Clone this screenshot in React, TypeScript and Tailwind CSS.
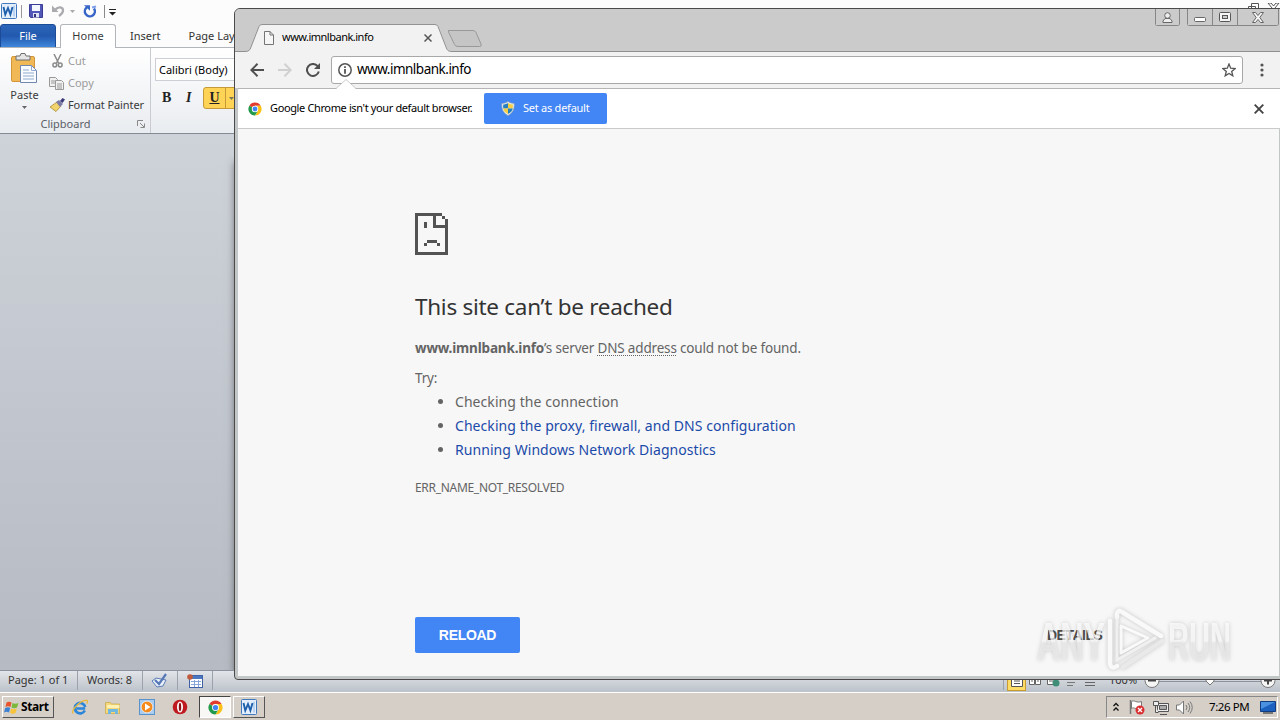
import type { ReactNode } from "react";

const UI = "font-['Noto_Sans','Open_Sans',sans-serif]";

function WordIcon({ size = 16 }: { size?: number }) {
  return (
    <svg width={size} height={size} viewBox="0 0 16 16" className="shrink-0">
      <rect x="0.5" y="0.5" width="15" height="15" rx="1" fill="#e4effb" stroke="#3f78bd" />
      <path d="M12 2.5h2v11h-2z" fill="#b9d3f0" />
      <path d="M2.500 4l1.800 7.500L7 5l2.400 6.500L11.500 4" fill="none" stroke="#1e5fae" strokeWidth="1.900" />
    </svg>
  );
}

function ChromeIcon({ size = 14 }: { size?: number }) {
  return (
    <svg width={size} height={size} viewBox="0 0 16 16" className="shrink-0">
      <circle cx="8" cy="8" r="7.5" fill="#fff" />
      <path d="M8 8L1.5 4.25A7.5 7.5 0 0 1 14.5 4.25H8z" fill="#e33b2e" />
      <path d="M8 4.25h6.5A7.5 7.5 0 0 1 8 15.5L11.2 10z" fill="#fbc116" />
      <path d="M1.5 4.25A7.5 7.5 0 0 0 8 15.5L11.2 9.9 8 8z" fill="#229a4b" />
      <circle cx="8" cy="8" r="3.7" fill="#fff" />
      <circle cx="8" cy="8" r="2.8" fill="#4285f4" />
    </svg>
  );
}

function WordTitleBar() {
  return (
    <div className="flex h-6 shrink-0 items-start bg-[#fcfcfc] pt-[3px] pl-[1px]">
      <WordIcon size={16} />
      <div className="mt-[2px] ml-1 h-[13px] w-px bg-[#999]" />
      <svg width="14" height="14" viewBox="0 0 14 14" className="mt-[1px] ml-[7px]">
        <path d="M.5.5h13v13h-12l-1-1z" fill="#5258b8" stroke="#383c92" />
        <path d="M3 1h8v6H3z" fill="#f3f5ff" />
        <path d="M4 9h6v4.5H4z" fill="#dfe2f4" />
        <path d="M5 10h2v3H5z" fill="#30347c" />
      </svg>
      <svg width="14" height="14" viewBox="0 0 14 14" className="mt-[1px] ml-2">
        <path d="M4.5 5.5C7 2.5 12 2.5 12 6.5c0 2.5-2 4-4 5.5" fill="none" stroke="#aaaaaf" strokeWidth="2.3" />
        <path d="M1 1.5V8h6.5z" fill="#aaaaaf" />
      </svg>
      <svg width="5" height="3" viewBox="0 0 5 3" className="mt-[7px] ml-[5px]"><path d="M0 0h5L2.5 3z" fill="#aaa" /></svg>
      <svg width="14" height="14" viewBox="0 0 14 14" className="mt-[1px] ml-2">
        <path d="M4 3.2A5 5 0 1 0 11 4.5" fill="none" stroke="#3866c8" strokeWidth="2.5" />
        <path d="M1 1.2h6v5.6z" fill="#3866c8" />
        <path d="M9 3.5l4-1" stroke="#7da0e8" strokeWidth="2" />
      </svg>
      <div className="mt-[2px] ml-[7px] h-[13px] w-px bg-[#888]" />
      <svg width="7" height="7" viewBox="0 0 7 7" className="mt-[6px] ml-[4px]">
        <path d="M0 .5h7" stroke="#222" />
        <path d="M0 3h7L3.5 6.5z" fill="#222" />
      </svg>
      <svg width="34" height="12" viewBox="0 0 34 12" className="ml-auto" fill="#fff" stroke="#555">
        <path d="M5.500 .5h7v7h-7zM2.500 3.500h7v7h-7z" />
        <path d="M22 0l3 0 2.500 3L30 0h3l-4 5 4 5h-3l-2.500-3L25 10h-3l4-5z" />
      </svg>
    </div>
  );
}

function RibbonTabs() {
  return (
    <div className="flex h-[23px] shrink-0 bg-[#fcfcfc] text-[11px] leading-[22px] text-[#333]">
      <div className="h-6 w-14 rounded-t-[3px] border border-[#1c4c98] bg-linear-to-b from-[#2b65b8] via-[#2259ae] to-[#4087dc] text-center text-white">File</div>
      <div className="z-1 ml-1 h-6 w-14 rounded-t-[3px] border border-b-0 border-[#b2b5ba] bg-white text-center text-black/80">Home</div>
      <div className="ml-[14px] pt-[1px]">Insert</div>
      <div className="ml-7 pt-[1px] whitespace-nowrap">Page Layout</div>
    </div>
  );
}

function Ribbon() {
  return (
    <div className="flex h-[87px] shrink-0 border-y border-t-[#b2b5ba] border-b-[#848a94] bg-linear-to-b from-white to-[#e9ecf0] text-[11px] leading-[22px] text-[#3b3b3b]">
      <div className="flex w-[151px] flex-col border-r border-[#c8ccd2]">
        <div className="flex h-[67px]">
          <div className="flex w-[49px] flex-col items-center pt-[5px]">
            <svg width="27" height="30" viewBox="0 0 27 30" className="shrink-0">
              <rect x=".5" y="3.500" width="23" height="25" rx="1.500" fill="#f0b955" stroke="#d4963a" />
              <path d="M5 3h4l1-2.500h4L15 3h4v4H5z" fill="#e5e5e5" stroke="#6d6d6d" />
              <path d="M9.500 12.500h11l5 5v12h-16z" fill="#fafdff" stroke="#7187ae" />
              <path d="M20.500 12.500v5h5M12 17h6M12 20h11M12 23h11M12 26h11" fill="none" stroke="#8fa9cf" />
            </svg>
            <div className="mt-[4px] leading-[16px]">Paste</div>
            <svg width="5" height="3" viewBox="0 0 5 3" className="mt-[3px]"><path d="M0 0h5L2.500 3z" fill="#666" /></svg>
          </div>
          <div className="flex flex-col pt-[2px] whitespace-nowrap">
            <div className="flex h-[22px] items-center text-[#9b9b9b]">
              <svg width="11" height="14" viewBox="0 0 11 14" className="mr-[5px] ml-[3px]" fill="none" stroke="#8b8b8b">
                <path d="M2 0l4.500 9M9 0L4.500 9" strokeWidth="1.500" />
                <circle cx="2.800" cy="11" r="1.900" strokeWidth="1.500" /><circle cx="8.200" cy="11" r="1.900" strokeWidth="1.500" />
              </svg>
              Cut
            </div>
            <div className="flex h-[22px] items-center text-[#9b9b9b]">
              <svg width="15" height="13" viewBox="0 0 15 13" className="mr-[4px]" fill="#f0f0f0" stroke="#999">
                <path d="M.5.500h6l2 2v7h-8zM2 4h4M2 6h4" />
                <path d="M6.500 3.500h6l2 2v7h-8zM8 7h5M8 9h5M8 11h5" />
              </svg>
              Copy
            </div>
            <div className="flex h-[22px] items-center tracking-[-0.100px]">
              <svg width="16" height="14" viewBox="0 0 16 14" className="mr-[3px]">
                <path d="M1 9l7-5 4 4-5 5.500z" fill="#f2d46c" stroke="#a88a2e" strokeWidth=".8" />
                <path d="M7 4l3-2 4 4-3 3z" fill="#7c7ba8" />
                <path d="M11 3l2.500-3L16 1.500 13.500 5z" fill="#3c3a78" />
              </svg>
              Format Painter
            </div>
          </div>
        </div>
        <div className="flex h-[18px] items-center text-[#5a6068]">
          <div className="w-[131px] text-center">Clipboard</div>
          <svg width="8" height="8" viewBox="0 0 8 8" className="ml-[6px]" fill="none" stroke="#888">
            <path d="M.5 6V.5H6M3 3l4 4M7.500 3.500v4h-4" />
          </svg>
        </div>
      </div>
      <div className="flex flex-col pt-[10px] pl-[4px]">
        <div className="flex h-[23px] w-[120px] items-center border border-[#ccd0d6] bg-white pl-[3px] text-black">Calibri (Body)</div>
        <div className="mt-[6px] flex h-[22px] items-center font-['Liberation_Serif',serif] text-[14px] font-bold text-[#222]">
          <span className="ml-[7px] w-[24px]">B</span>
          <span className="w-[17px] italic">I</span>
          <div className="flex h-[22px] w-10 items-center rounded-[3px] border border-[#c59b38] bg-[#ffd456]">
            <span className="flex h-5 w-[22px] items-center justify-center border-r border-[#c59b38] underline">U</span>
            <svg width="5" height="3" viewBox="0 0 5 3" className="ml-[3px]"><path d="M0 0h5L2.500 3z" fill="#775" /></svg>
          </div>
        </div>
      </div>
    </div>
  );
}

function StatusDivider() {
  return <div className="h-[19px] w-px shrink-0 bg-[#9ca2ac]" />;
}

function WordStatusBar() {
  return (
    <div className="flex h-[22px] shrink-0 items-center border-t border-[#8d939c] bg-linear-to-b from-[#e2e5e9] to-[#bcc2ca] pb-[2px] text-[11px] text-[#333]">
      <div className="w-[77px] pl-2 whitespace-nowrap">Page: 1 of 1</div>
      <StatusDivider />
      <div className="w-[64px] pl-[9px] whitespace-nowrap">Words: 8</div>
      <StatusDivider />
      <svg width="17" height="15" viewBox="0 0 17 15" className="ml-2">
        <path d="M1 8l4-3 10 2-3 6-6 1z" fill="#e9f0fa" stroke="#5b7cb4" />
        <path d="M4 7l4 4 7-10" fill="none" stroke="#5879b8" strokeWidth="2.200" />
      </svg>
      <div className="ml-[9px]"><StatusDivider /></div>
      <svg width="16" height="14" viewBox="0 0 16 14" className="ml-[9px]">
        <rect x="2.500" y="1.500" width="13" height="12" fill="#fff" stroke="#3e62a5" />
        <path d="M3 2h12v3H3z" fill="#4a76c2" />
        <path d="M4 7.500h10M4 10.500h10M7.500 6v7M11.500 6v7" stroke="#86a5d8" />
        <circle cx="3" cy="3" r="2.800" fill="#c05a3c" />
      </svg>
      <div className="ml-[9px]"><StatusDivider /></div>
      <div className="ml-auto flex h-full items-center">
        <StatusDivider />
        <div className="ml-[3px] flex h-[20px] w-[19px] items-center justify-center border border-[#c89c32] bg-[#ffdc66]">
          <svg width="12" height="12" viewBox="0 0 12 12" fill="#fff" stroke="#555"><path d="M.5.5h11v11H.5zM3 3.500h6M3 6h6M3 8.500h6" /></svg>
        </div>
        <svg width="12" height="12" viewBox="0 0 12 12" className="ml-[3px]" fill="#fff" stroke="#666"><path d="M.5 1.500h5v8h-5zM6.500 1.500h5v8h-5zM2 4h2M2 6h2M8 4h2M8 6h2" /></svg>
        <svg width="13" height="12" viewBox="0 0 13 12" className="ml-[6px]"><path d="M.5.500h9v9h-9zM2 3h6M2 6h6" fill="#fff" stroke="#666" /><circle cx="9" cy="8" r="3.500" fill="#3f8f78" /></svg>
        <svg width="10" height="11" viewBox="0 0 10 11" className="ml-[7px]" stroke="#777"><path d="M2 1.500h8M2 4.500h6M0 7.500h8M0 10.500h6" /></svg>
        <svg width="10" height="11" viewBox="0 0 10 11" className="ml-[8px]" stroke="#666"><path d="M0 1.500h10M0 4.500h10M0 7.500h10M0 10.500h10" /></svg>
        <div className="ml-[14px] w-[27px] text-[11px] whitespace-nowrap">100%</div>
        <svg width="138" height="18" viewBox="0 0 138 18" className="mr-[1px] ml-[5px]">
          <path d="M18 9.500h102" stroke="#8b929c" />
          <circle cx="11" cy="8.500" r="7" fill="#f5f5f5" stroke="#777" />
          <path d="M7 8.500h8" stroke="#444" strokeWidth="2" />
          <path d="M65 4h8v5l-4 4-4-4z" fill="#fff" stroke="#777" />
          <circle cx="127" cy="8.500" r="7" fill="#f5f5f5" stroke="#777" />
          <path d="M123 8.500h8M127 4.500v8" stroke="#444" strokeWidth="2" />
        </svg>
      </div>
    </div>
  );
}

function CaptionButton({ width, children }: { width: string; children: ReactNode }) {
  return (
    <div className={`flex h-[17px] items-center justify-center border-b border-l border-[#858585] ${width}`}>{children}</div>
  );
}

function TabStrip() {
  return (
    <div className="flex h-[43px] shrink-0 border-b border-[#8f8f8f] bg-[#cbcbcb]">
      <div className="relative mt-[15px] ml-[10px] h-7 w-[208px]">
        <svg width="208" height="28" viewBox="0 0 208 28" className="absolute inset-0">
          <path d="M0 27.500C4 27.500 5 26 6 23L14 2.500Q15 .5 17 .5H190Q192 .5 193 2.500L201 23C202 26 203 27.500 207 27.500V28H0z" fill="#f2f2f2" />
          <path d="M0 27.500C4 27.500 5 26 6 23L14 2.500Q15 .5 17 .5H190Q192 .5 193 2.500L201 23C202 26 203 27.500 207 27.500" fill="none" stroke="#929292" />
        </svg>
        <div className="relative flex h-full items-center pl-[19px]">
          <svg width="10" height="14" viewBox="0 0 10 14" fill="#f6f6f6" stroke="#757575"><path d="M.5.500h5.500l3.500 3.500v9.500h-9zM6 .5V4h3.500" /></svg>
          <span className="ml-2 w-[140px] pb-[2px] text-[11px] tracking-[-0.500px] text-black">www.imnlbank.info</span>
          <svg width="8" height="8" viewBox="0 0 8 8" className="ml-[2px]"><path d="M.5.500l7 7M7.500.500l-7 7" stroke="#555" strokeWidth="1.500" /></svg>
        </div>
      </div>
      <svg width="36" height="18" viewBox="0 0 36 18" className="mt-[21px] -ml-[6px]">
        <path d="M1.500.500H26Q28 .5 29 2.500L34 14Q35 16.500 32.500 16.500H11Q8.500 16.500 7.500 14.500L1.500 2Q1 .5 2.500.500z" fill="#c5c5c5" stroke="#989898" />
      </svg>
      <div className="ml-auto flex items-start">
        <div className="mr-[7px] overflow-hidden rounded-b-[3px] border-r border-[#858585]">
          <CaptionButton width="w-[24px]">
            <svg width="11" height="11" viewBox="0 0 11 11" fill="#eee" stroke="#666"><path d="M1 10.500V9L3 6.500h5L10 9v1.500z" /><circle cx="5.500" cy="3.500" r="2.800" /></svg>
          </CaptionButton>
        </div>
        <div className="mr-[1px] flex overflow-hidden rounded-b-[3px] border-r border-[#858585]">
          <CaptionButton width="w-[25px]">
            <svg width="12" height="5" viewBox="0 0 12 5" className="mt-[4px]"><rect x=".5" y=".5" width="11" height="4" rx="1" fill="#fff" stroke="#666" /></svg>
          </CaptionButton>
          <CaptionButton width="w-[25px]">
            <svg width="12" height="10" viewBox="0 0 12 10" fill="#f5f5f5" stroke="#555"><rect x=".5" y=".5" width="11" height="9" rx="1" /><rect x="3.500" y="3.500" width="5" height="3" fill="#ccc" /></svg>
          </CaptionButton>
          <CaptionButton width="w-[41px]">
            <svg width="12" height="11" viewBox="0 0 12 11"><path d="M.5.500h3L6 3.500 8.500.500h3L7.800 5.500l3.700 5h-3L6 7.500l-2.500 3h-3l3.700-5z" fill="#f5f5f5" stroke="#666" /></svg>
          </CaptionButton>
        </div>
      </div>
    </div>
  );
}

function Toolbar() {
  return (
    <div className="flex h-[36px] shrink-0 items-center bg-[#f2f2f2] pl-[15px]">
      <svg width="14" height="14" viewBox="0 0 14 14" fill="none" stroke="#4f4f4f" strokeWidth="2"><path d="M14 7H1.500M7.500.800L1.300 7l6.200 6.200" /></svg>
      <svg width="14" height="14" viewBox="0 0 14 14" className="ml-[14px]" fill="none" stroke="#d0d0d0" strokeWidth="2"><path d="M0 7h12.500M6.500.800L12.700 7l-6.200 6.200" /></svg>
      <svg width="14" height="14" viewBox="0 0 14 14" className="ml-[14px]">
        <path d="M11.500 3A6 6 0 1 0 12.800 8.500" fill="none" stroke="#4f4f4f" strokeWidth="2" />
        <path d="M14 0v6H8z" fill="#4f4f4f" />
      </svg>
      <div className="ml-[11px] flex h-[28px] w-[912px] items-center rounded-[3px] border border-[#a8a8a8] bg-white pl-[6px]">
        <svg width="14" height="14" viewBox="0 0 14 14"><circle cx="7" cy="7" r="6.200" fill="none" stroke="#555" strokeWidth="1.500" /><path d="M6.100 3.200h1.800V5H6.100zM6.100 6h1.800v4.800H6.100z" fill="#555" /></svg>
        <span className="ml-[5px] pb-[1px] text-[13.500px] tracking-[-0.500px] text-black">www.imnlbank.info</span>
        <svg width="14" height="14" viewBox="0 0 14 14" className="mr-[6px] ml-auto"><path d="M7 1l1.700 4.200 4.500.3-3.500 2.900 1.100 4.400L7 10.400l-3.800 2.400 1.100-4.400L.8 5.500l4.500-.3z" fill="none" stroke="#555" strokeWidth="1.300" /></svg>
      </div>
      <svg width="4" height="14" viewBox="0 0 4 14" className="ml-[17px]" fill="#555"><circle cx="2" cy="2" r="1.600" /><circle cx="2" cy="7" r="1.600" /><circle cx="2" cy="12" r="1.600" /></svg>
    </div>
  );
}

function Shield() {
  return (
    <svg width="14" height="15" viewBox="0 0 14 15">
      <path d="M7 .5C5 2 3 2.300.8 2.500.5 8 2 12 7 14.500 12 12 13.500 8 13.200 2.500 11 2.300 9 2 7 .5z" fill="#e7edf2" stroke="#929da9" strokeWidth=".6" />
      <path d="M7 2C5.500 3 4 3.400 2.200 3.600V7.500H7z" fill="#287fc0" />
      <path d="M7 2c1.500 1 3 1.400 4.800 1.600V7.500H7z" fill="#f6cf43" />
      <path d="M2.200 7.500H7V13C4 11.500 2.500 9.800 2.200 7.500z" fill="#f6cf43" />
      <path d="M11.800 7.500H7V13c3-1.500 4.500-3.200 4.800-5.500z" fill="#287fc0" />
    </svg>
  );
}

function InfoBar() {
  return (
    <div className="relative ml-[3px] flex h-[41px] shrink-0 items-center border-y border-t-[#b5b5b5] border-b-[#cacaca] bg-white pl-[10px]">
      <svg width="22" height="10" viewBox="0 0 22 10" className="absolute -top-[10px] left-[97px]"><path d="M1 10L11 0.500 21 10z" fill="#fff" /><path d="M1 9.500L11 .5l10 9" fill="none" stroke="#c0c0c0" strokeWidth=".8" /></svg>
      <ChromeIcon size={14} />
      <span className="ml-[8px] w-[214px] text-[11px] tracking-[-0.370px] whitespace-nowrap text-black">Google Chrome isn't your default browser.</span>
      <button className="flex h-[31px] w-[123px] items-center rounded-[2px] bg-[#4285f4] pl-[17px] text-[11px] tracking-[-0.250px] whitespace-nowrap text-white">
        <Shield />
        <span className="ml-2 pb-[1px]">Set as default</span>
      </button>
      <svg width="10" height="10" viewBox="0 0 10 10" className="mr-[16px] ml-auto"><path d="M.7.700l8.600 8.600M9.300.700L.7 9.300" stroke="#444" strokeWidth="1.900" /></svg>
    </div>
  );
}

function SadPage() {
  return (
    <svg width="33" height="42" viewBox="0 0 33 42" fill="#535353" shapeRendering="crispEdges">
      <path d="M0 0h27v3H3v36h27V15H18V3h3v9h9V6h3v36H0z" />
      <path d="M27 3h3v3h-3zM9 9h3v6H9zM12 27h10v3H12zM9 30h3v3H9zM22 30h3v3h-3z" />
    </svg>
  );
}

function ErrorPage() {
  return (
    <div className="relative mr-[1px] ml-[3px] flex grow flex-col bg-[#f7f7f7] pl-[177px] text-[14px] text-[#646464]">
      <div className="mt-[84px]"><SadPage /></div>
      <h1 className="mt-[36px] text-[22.500px] leading-[32px] tracking-[-0.280px] whitespace-nowrap text-[#333]">This site can’t be reached</h1>
      <p className="mt-[15px] text-[13.500px] leading-[20px] tracking-[-0.170px] whitespace-nowrap">
        <b>www.imnlbank.info</b>’s server <span className="underline decoration-dotted decoration-1 underline-offset-2">DNS address</span> could not be found.
      </p>
      <p className="mt-[10px] text-[13.500px] leading-[20px] tracking-[-0.170px]">Try:</p>
      <ul className="ml-10 list-disc leading-6 tracking-[0.060px] whitespace-nowrap">
        <li className="mt-[2px]">Checking the connection</li>
        <li><a className="text-[#1b4aa9]">Checking the proxy, firewall, and DNS configuration</a></li>
        <li><a className="text-[#1b4aa9]">Running Windows Network Diagnostics</a></li>
      </ul>
      <p className="mt-[16px] text-[12px] leading-[20px] tracking-[-0.300px]">ERR_NAME_NOT_RESOLVED</p>
      <div className="mt-auto mb-[23px] flex h-9 items-center font-['Liberation_Sans',Arial,sans-serif] text-[14px] font-bold">
        <button className="h-9 w-[105px] rounded-[2px] bg-[#4285f4] tracking-[-0.300px] text-white">RELOAD</button>
        <span className="ml-[527px] tracking-[-0.500px] text-[#505050]">DETAILS</span>
      </div>
      <Watermark />
    </div>
  );
}

function Watermark() {
  return (
    <svg width="206" height="72" viewBox="0 0 206 72" className="absolute right-[42px] bottom-[1px] drop-shadow-[0_0_2px_rgba(0,0,0,0.25)]">
      <defs>
        <linearGradient id="wm" x1="0" y1="19" x2="0" y2="57" gradientUnits="userSpaceOnUse">
          <stop offset="0.5" stopColor="#fff" />
          <stop offset="0.55" stopColor="#ebebeb" />
        </linearGradient>
      </defs>
      <g fontFamily="Liberation Sans, Arial, sans-serif" fontSize="53" fontWeight="700" fill="url(#wm)" fillOpacity=".7">
        <text x="6" y="57" textLength="68" lengthAdjust="spacingAndGlyphs">ANY</text>
        <text x="137" y="57" textLength="63" lengthAdjust="spacingAndGlyphs">RUN</text>
      </g>
      <g fill="none" stroke="#fff" strokeWidth="4.500" strokeOpacity=".85" strokeLinejoin="round" strokeLinecap="round">
        <path d="M86 14V11Q87 6 91 9L130 33" />
        <path d="M79 18V60Q80 67 86 63" />
        <path d="M90 23V50L117 35z" strokeWidth="3" />
        <path d="M131 38L92 64" stroke="#ececec" />
        <path d="M86 14V57L124 35" stroke="#f4f4f4" strokeWidth="3" />
      </g>
    </svg>
  );
}

function ChromeWindow() {
  return (
    <div className="absolute top-2 left-[234px] flex h-[672px] w-[1047px] flex-col rounded-tl-[6px] rounded-bl-[4px] border border-[#4a4a4a] bg-[#c3c6c6] pb-[3px]">
      <div className="flex grow flex-col overflow-hidden rounded-tl-[5px]">
        <TabStrip />
        <Toolbar />
        <InfoBar />
        <ErrorPage />
      </div>
    </div>
  );
}

function Taskbar() {
  return (
    <div className="flex h-[28px] shrink-0 items-center border-t border-white bg-[#d5cfc8] pt-[1px]">
      <div className="ml-[2px] flex h-[22px] w-[52px] items-center border border-t-white border-r-[#555] border-b-[#555] border-l-white pl-[1px] text-[12px] font-bold tracking-[-0.400px] text-black">
        <svg width="16" height="15" viewBox="0 0 16 15" className="mr-[1px] shrink-0">
          <path d="M2.500 2.500Q5 1 7.500 2.500L6.500 7Q4 5.500 1.500 7z" fill="#e8542c" />
          <path d="M8.500 3Q11 4.500 14.500 3L13 7.500Q10.500 9 7.500 7.500z" fill="#7cb83c" />
          <path d="M1.200 8Q4 6.500 6.200 8L5 12.500Q2.500 11 0 12.500z" fill="#3c82d2" />
          <path d="M7.200 8.500Q10 10 12.800 8.500L11.500 13Q9 14.500 6 13z" fill="#f7c338" />
        </svg>
        Start
      </div>
      <svg width="16" height="16" viewBox="0 0 16 16" className="ml-[18px]">
        <path d="M13.200 9.500H4.500M12.800 11.500A5.200 5.200 0 1 1 13.200 8" fill="none" stroke="#2b86d9" strokeWidth="2.700" />
        <path d="M1 14.500C-1 11 9 .5 15 1.500c1 .5.500 2-.3 3" fill="none" stroke="#e6b93d" strokeWidth="1.300" />
      </svg>
      <svg width="16" height="15" viewBox="0 0 16 15" className="ml-[17px]">
        <path d="M.5 2.500h5l1 1.500h8v9.500h-14z" fill="#f5d978" stroke="#c9a646" strokeWidth=".7" />
        <path d="M2 5h12.500v3H2z" fill="#fff1b4" />
        <path d="M3 14V9h10v5h-3v-2H6v2z" fill="#72b7dd" />
      </svg>
      <svg width="16" height="16" viewBox="0 0 16 16" className="ml-[18px]">
        <rect x=".5" y=".5" width="15" height="15" fill="#a9cdf0" stroke="#5b92cb" />
        <circle cx="8" cy="8" r="5.800" fill="#f58a1f" stroke="#fff" strokeWidth=".6" /><path d="M6 4.500v7l5.500-3.500z" fill="#fff" />
      </svg>
      <svg width="16" height="16" viewBox="0 0 16 16" className="ml-[17px]">
        <circle cx="8" cy="8" r="7.300" fill="#bf1a20" /><ellipse cx="8" cy="8" rx="3" ry="5.500" fill="#fff" /><ellipse cx="8" cy="8" rx="1.200" ry="4.300" fill="#8c1015" />
      </svg>
      <div className="ml-[11px] flex h-[22px] w-[32px] items-center justify-center border border-t-[#444] border-r-white border-b-white border-l-[#444] bg-[#f8f7f5]"><ChromeIcon size={15} /></div>
      <div className="ml-[2px] flex h-[22px] w-[32px] items-center justify-center border border-t-white border-r-[#555] border-b-[#555] border-l-white"><WordIcon size={16} /></div>
      <div className="mr-[2px] ml-auto flex h-[22px] w-[172px] items-center border border-t-[#888] border-r-white border-b-white border-l-[#888] text-[11.500px] text-black">
        <svg width="6" height="10" viewBox="0 0 6 10" className="ml-[6px]" fill="none" stroke="#111" strokeWidth="1.300"><path d="M.5 4L3 1.500 5.500 4M.5 8.500L3 6l2.500 2.500" /></svg>
        <svg width="16" height="16" viewBox="0 0 16 16" className="ml-[10px]">
          <path d="M1.500 1v14" stroke="#777" strokeWidth="1.500" /><path d="M2.500 2.500c3-2 5 2 10 0v7c-5 2-7-2-10 0z" fill="#fff" stroke="#777" />
          <circle cx="11" cy="11" r="4.500" fill="#da2d30" /><path d="M9 9l4 4M13 9l-4 4" stroke="#fff" strokeWidth="1.400" />
        </svg>
        <svg width="16" height="15" viewBox="0 0 16 15" className="ml-[8px]" fill="#eee" stroke="#555">
          <path d="M4.500 3.500h11v8h-11z" /><path d="M6.500 5.500h7v4h-7z" fill="#aaa" /><path d="M7 14.500h7M.5 1.500h5v4h-5zM2.500 5.500v7h3" />
        </svg>
        <svg width="17" height="15" viewBox="0 0 17 15" className="ml-[7px]" fill="none" stroke="#777">
          <path d="M.5 5h3l4-4v13l-4-4h-3z" fill="#fff" /><path d="M10 5q2 2.500 0 5M12 3q3.500 4.500 0 9M14 1.500q4.500 6 0 12" />
        </svg>
        <span className="ml-[16px] w-[41px] tracking-[-0.400px] whitespace-nowrap">7:26 PM</span>
        <svg width="16" height="13" viewBox="0 0 16 13" className="ml-[10px]"><path d="M.5.500h15v10H.5z" fill="#1c61bf" stroke="#123c80" /><path d="M1 1h14L1 8z" fill="#4a91df" /><path d="M3 12h10" stroke="#777" strokeWidth="2" /></svg>
      </div>
    </div>
  );
}

export default function App() {
  return (
    <div className={`relative flex h-[720px] w-[1280px] flex-col overflow-hidden bg-[#b4bac4] ${UI}`}>
      <WordTitleBar />
      <RibbonTabs />
      <Ribbon />
      <div className="flex grow overflow-hidden bg-linear-to-b from-[#ced2d9] to-[#b6bac2]">
        {/* document page, only its shadow shows beside the browser */}
        <div className="mt-[24px] ml-[235px] grow bg-white shadow-[0_4px_8px_rgba(0,0,0,0.5)]" />
      </div>
      <WordStatusBar />
      <Taskbar />
      <ChromeWindow />
    </div>
  );
}
